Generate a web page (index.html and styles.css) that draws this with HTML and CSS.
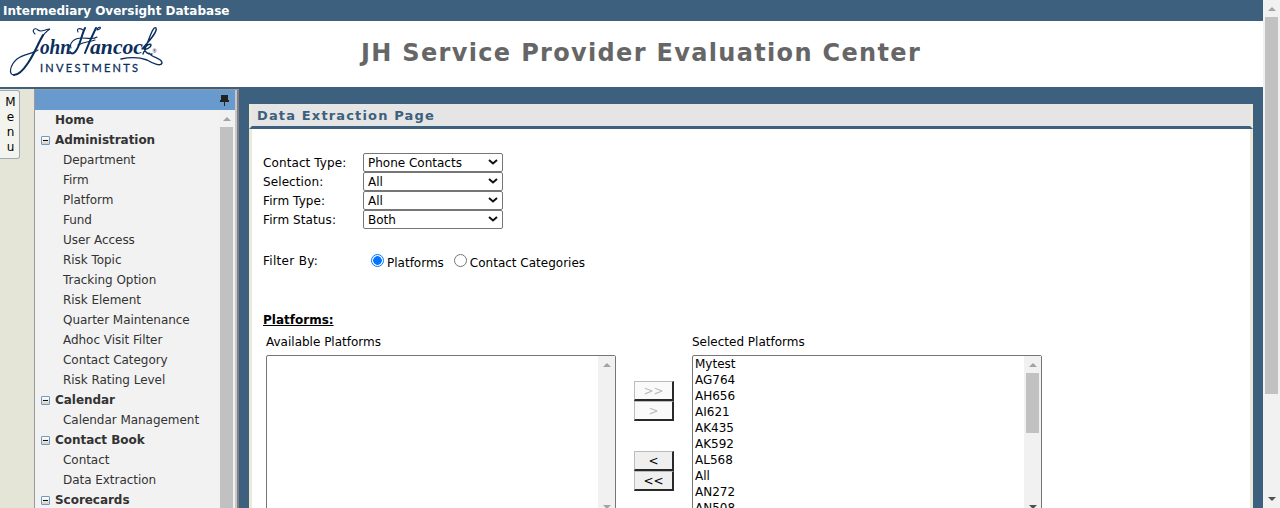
FILE: index.html
```html
<!DOCTYPE html>
<html lang="en">
<head>
<meta charset="utf-8">
<title>JH Service Provider Evaluation Center</title>
<link rel="stylesheet" href="styles.css">
</head>
<body>
<div class="page">
  <header class="topbar">Intermediary Oversight Database</header>
  <div class="banner">
    <svg class="logo" width="160" height="60" viewBox="0 0 160 60" role="img" aria-label="John Hancock Investments">
      <g fill="none" stroke="#0b2e5c" stroke-linecap="round">
        <path stroke-width="1.1" d="M30 12C26 8 30 5 33 8C36 11 40 7 45 7C39 10 36 17 33 22"/>
        <path stroke-width="2.1" d="M38 13C33 22 29 32 23 41C19 47 14 53 9 53"/>
        <path stroke-width="1.2" d="M9 53C3 53 5 43 12 37C18 32 27 32 33 28"/>
        <path stroke-width="1.1" d="M73 10C71 6 75 6 78 8M66 26C64 21 69 16 77 16S88 18 92 15M73 23C80 19 85 20 90 18M92 7C96 3 97 7 92 8"/>
        <path stroke-width="2" d="M80 6C76 14 75 25 70 30Q67 33 65 30M91 6C87 14 83 23 80 31"/>
        <path stroke-width="1.4" d="M137 27C143 20 153 10 151 6C148 3 144 18 138 32M139 27C144 20 148 22 145 25Q142 28 139 27Q142 33 147 32M144 31C147 36 157 36 157 41C156 45 147 41 142 38C134 35 125 35 116 37"/>
      </g>
      <g class="logo-script"><text x="35" y="32" textLength="31" lengthAdjust="spacingAndGlyphs">ohn</text><text x="85" y="32" textLength="53" lengthAdjust="spacingAndGlyphs">ancoc</text></g>
      <text class="logo-mark" x="147.500" y="31">®</text>
      <text class="logo-sub" x="35" y="50" textLength="98">INVESTMENTS</text>
    </svg>
    <h1 class="title">JH Service Provider Evaluation Center</h1>
  </div>
  <div class="workspace">
    <div class="rail"><div class="menu-tab"><span>M</span><span>e</span><span>n</span><span>u</span></div></div>
    <nav class="sidebar">
      <div class="sidebar-head"><svg width="9" height="11" viewBox="0 0 9 11"><path fill="#222" d="M1 0h7v5h1v2H5v4H4V7H0V5h1z"/></svg></div>
      <div class="sidebar-body">
        <ul class="tree">
          <li class="group">Home</li>
          <li class="group"><i class="toggle"></i>Administration</li>
          <li>Department</li><li>Firm</li><li>Platform</li><li>Fund</li><li>User Access</li><li>Risk Topic</li><li>Tracking Option</li><li>Risk Element</li><li>Quarter Maintenance</li><li>Adhoc Visit Filter</li><li>Contact Category</li><li>Risk Rating Level</li>
          <li class="group"><i class="toggle"></i>Calendar</li>
          <li>Calendar Management</li>
          <li class="group"><i class="toggle"></i>Contact Book</li>
          <li>Contact</li><li>Data Extraction</li>
          <li class="group"><i class="toggle"></i>Scorecards</li>
        </ul>
        <div class="scroll"><i class="up"></i><div class="thumb fill"></div></div>
      </div>
    </nav>
    <main class="content">
      <section class="panel">
        <h2 class="panel-title">Data Extraction Page</h2>
        <div class="panel-body">
          <div class="field"><label>Contact Type:</label><div class="select">Phone Contacts<svg width="10" height="6"><path d="M1 1l4 3.5L9 1"/></svg></div></div>
          <div class="field"><label>Selection:</label><div class="select">All<svg width="10" height="6"><path d="M1 1l4 3.5L9 1"/></svg></div></div>
          <div class="field"><label>Firm Type:</label><div class="select">All<svg width="10" height="6"><path d="M1 1l4 3.5L9 1"/></svg></div></div>
          <div class="field"><label>Firm Status:</label><div class="select">Both<svg width="10" height="6"><path d="M1 1l4 3.5L9 1"/></svg></div></div>
          <div class="filter"><span class="filter-label">Filter By:</span><i class="radio on"></i><span class="choice">Platforms</span><i class="radio"></i><span class="choice">Contact Categories</span></div>
          <h3 class="subhead">Platforms:</h3>
          <div class="picker">
            <div class="column"><div class="caption">Available Platforms</div>
              <div class="listbox"><div class="options"></div><div class="scroll idle"><i class="up"></i><i class="down"></i></div></div>
            </div>
            <div class="moves"><button disabled>&gt;&gt;</button><button disabled>&gt;</button><button class="gap">&lt;</button><button>&lt;&lt;</button></div>
            <div class="column"><div class="caption">Selected Platforms</div>
              <div class="listbox"><div class="options"><div>Mytest</div><div>AG764</div><div>AH656</div><div>AI621</div><div>AK435</div><div>AK592</div><div>AL568</div><div>All</div><div>AN272</div><div>AN508</div></div><div class="scroll"><i class="up"></i><div class="thumb short"></div><i class="down"></i></div></div>
            </div>
          </div>
        </div>
      </section>
    </main>
  </div>
</div>
<div class="scroll page-scroll"><i class="up"></i><div class="thumb long"></div><i class="down"></i></div>
</body>
</html>
```
FILE: styles.css
```css
* { box-sizing: border-box; }
body { margin: 0; height: 508px; overflow: hidden; display: flex; background: #fff; font: 12px/16px Verdana, "DejaVu Sans", sans-serif; color: #000; }
.page { width: 1263px; height: 508px; display: flex; flex-direction: column; }
.topbar { height: 21px; flex: none; padding-left: 3px; background: #3c607d; color: #fff; font-weight: bold; line-height: 22px; }
.banner { height: 66px; flex: none; display: flex; padding-left: 5px; }
.logo { flex: none; width: 160px; margin-top: 1px; }
.logo-script { font: italic bold 22px "Liberation Serif", serif; fill: #0b2e5c; }
.logo-sub { font: 11px Lato, sans-serif; fill: #0b2e5c; stroke: #0b2e5c; stroke-width: .3px; }
.logo-mark { font: 5px Lato, sans-serif; fill: #0b2e5c; }
.title { margin: 15px 0 0 196px; font-size: 24px; line-height: 34px; letter-spacing: 1.33px; color: #666; white-space: nowrap; }
.workspace { flex: 1; min-height: 0; display: flex; background: #3c607d; padding-top: 2px; }
.rail { width: 34px; flex: none; background: #e4e5d7; padding-top: 1px; }
.menu-tab { width: 20px; height: 69px; padding: 4px 0 0 2px; border: 1px solid #9da9b3; border-left: 0; border-radius: 0 3px 3px 0; background: #f4f4ef; display: flex; flex-direction: column; align-items: center; line-height: 15px; }
.sidebar { width: 205px; flex: none; border: 1px solid #999; border-width: 1px 0 0 1px; background: #f2f2f2; display: flex; flex-direction: column; box-shadow: inset -2px 0 #808080, inset -4px 0 #c8c8c8; padding-right: 4px; }
.sidebar-head { height: 20px; flex: none; background: #689acd; display: flex; justify-content: flex-end; align-items: center; padding-right: 6px; }
.sidebar-body { flex: 1; min-height: 0; display: flex; }
.tree { list-style: none; margin: 0; padding: 0; width: 183px; color: #333; line-height: 20px; overflow: hidden; }
.tree li { height: 20px; padding-left: 28px; white-space: nowrap; letter-spacing: -.04px; }
.tree .group { font-weight: bold; padding-left: 20px; display: flex; }
.toggle { width: 9px; height: 9px; margin: 6px 5px 0 -14px; border: 1px solid #7098c4; border-radius: 1px; background: linear-gradient(#111, #111) center / 5px 1px no-repeat, linear-gradient(#fff, #d5d2c8); }
.scroll { width: 17px; flex: none; background: #f1f1f1; display: flex; flex-direction: column; align-items: center; }
.up { flex: none; margin: 7px 0 6px; border: 4px solid transparent; border-top: 0; border-bottom: 4px solid #a3a3a3; }
.down { flex: none; margin: auto 0 7px; border: 4px solid transparent; border-bottom: 0; border-top: 4px solid #505050; }
.thumb { width: 13px; background: #c1c1c1; flex: none; }
.thumb.fill { flex: 1; }
.thumb.short { height: 60px; }
.thumb.long { height: 377px; }
.idle .down { border-top-color: #a3a3a3; }
.content { flex: 1; min-width: 0; padding: 15px 10px 0; }
.panel { height: 404px; background: #fff; display: flex; flex-direction: column; }
.panel-title { margin: 0; height: 25px; flex: none; border: 3px solid #ece9d8; border-top: 0; border-bottom-color: #3c607d; background: #e5e5e5; color: #3c607d; font-size: 13px; letter-spacing: 1.15px; line-height: 23px; padding-left: 5px; }
.panel-body { flex: 1; min-height: 0; border: 3px solid #ece9d8; border-width: 0 3px; padding: 24px 0 0 11px; overflow: hidden; }
.field { display: flex; height: 19px; line-height: 20px; }
.field label { width: 100px; letter-spacing: .1px; }
.select { width: 140px; height: 19px; border: 1px solid #767676; border-radius: 2px; padding: 0 4px; line-height: 18px; display: flex; justify-content: space-between; align-items: flex-start; }
.select svg { margin-top: 5px; }
.select path { fill: none; stroke: #111; stroke-width: 2; }
.filter { display: flex; margin-top: 23px; height: 20px; }
.filter-label { width: 108px; line-height: 18px; letter-spacing: .3px; }
.radio { width: 13px; height: 13px; margin: 2px 3px 0 0; border: 1px solid #767676; border-radius: 50%; }
.radio.on { border-color: #0075ff; background: radial-gradient(circle, #0075ff 4px, #fff 4.6px); }
.choice { line-height: 22px; margin-right: 10px; }
.subhead { margin: 39px 0 0; font-size: 12px; line-height: 18px; text-decoration: underline; }
.picker { display: flex; padding-left: 3px; margin-top: 3px; }
.column { width: 350px; }
.caption { height: 23px; line-height: 20px; }
.listbox { height: 160px; display: flex; border: 1px solid #767676; border-radius: 2px; }
.options { flex: 1; padding-left: 2px; overflow: hidden; }
.listbox .down { margin-bottom: 5px; }
.moves { width: 76px; padding: 49px 18px 0; display: flex; flex-direction: column; }
.moves button { height: 20px; padding: 0; border: 1px solid #bbb; border-right: 2px solid #292929; border-bottom: 2px solid #292929; background: #efefef; font: 12px/16px Verdana, "DejaVu Sans", sans-serif; color: #000; }
.moves button:disabled { background: #fafafa; color: #bbb; }
.moves .gap { margin-top: 30px; }
```
